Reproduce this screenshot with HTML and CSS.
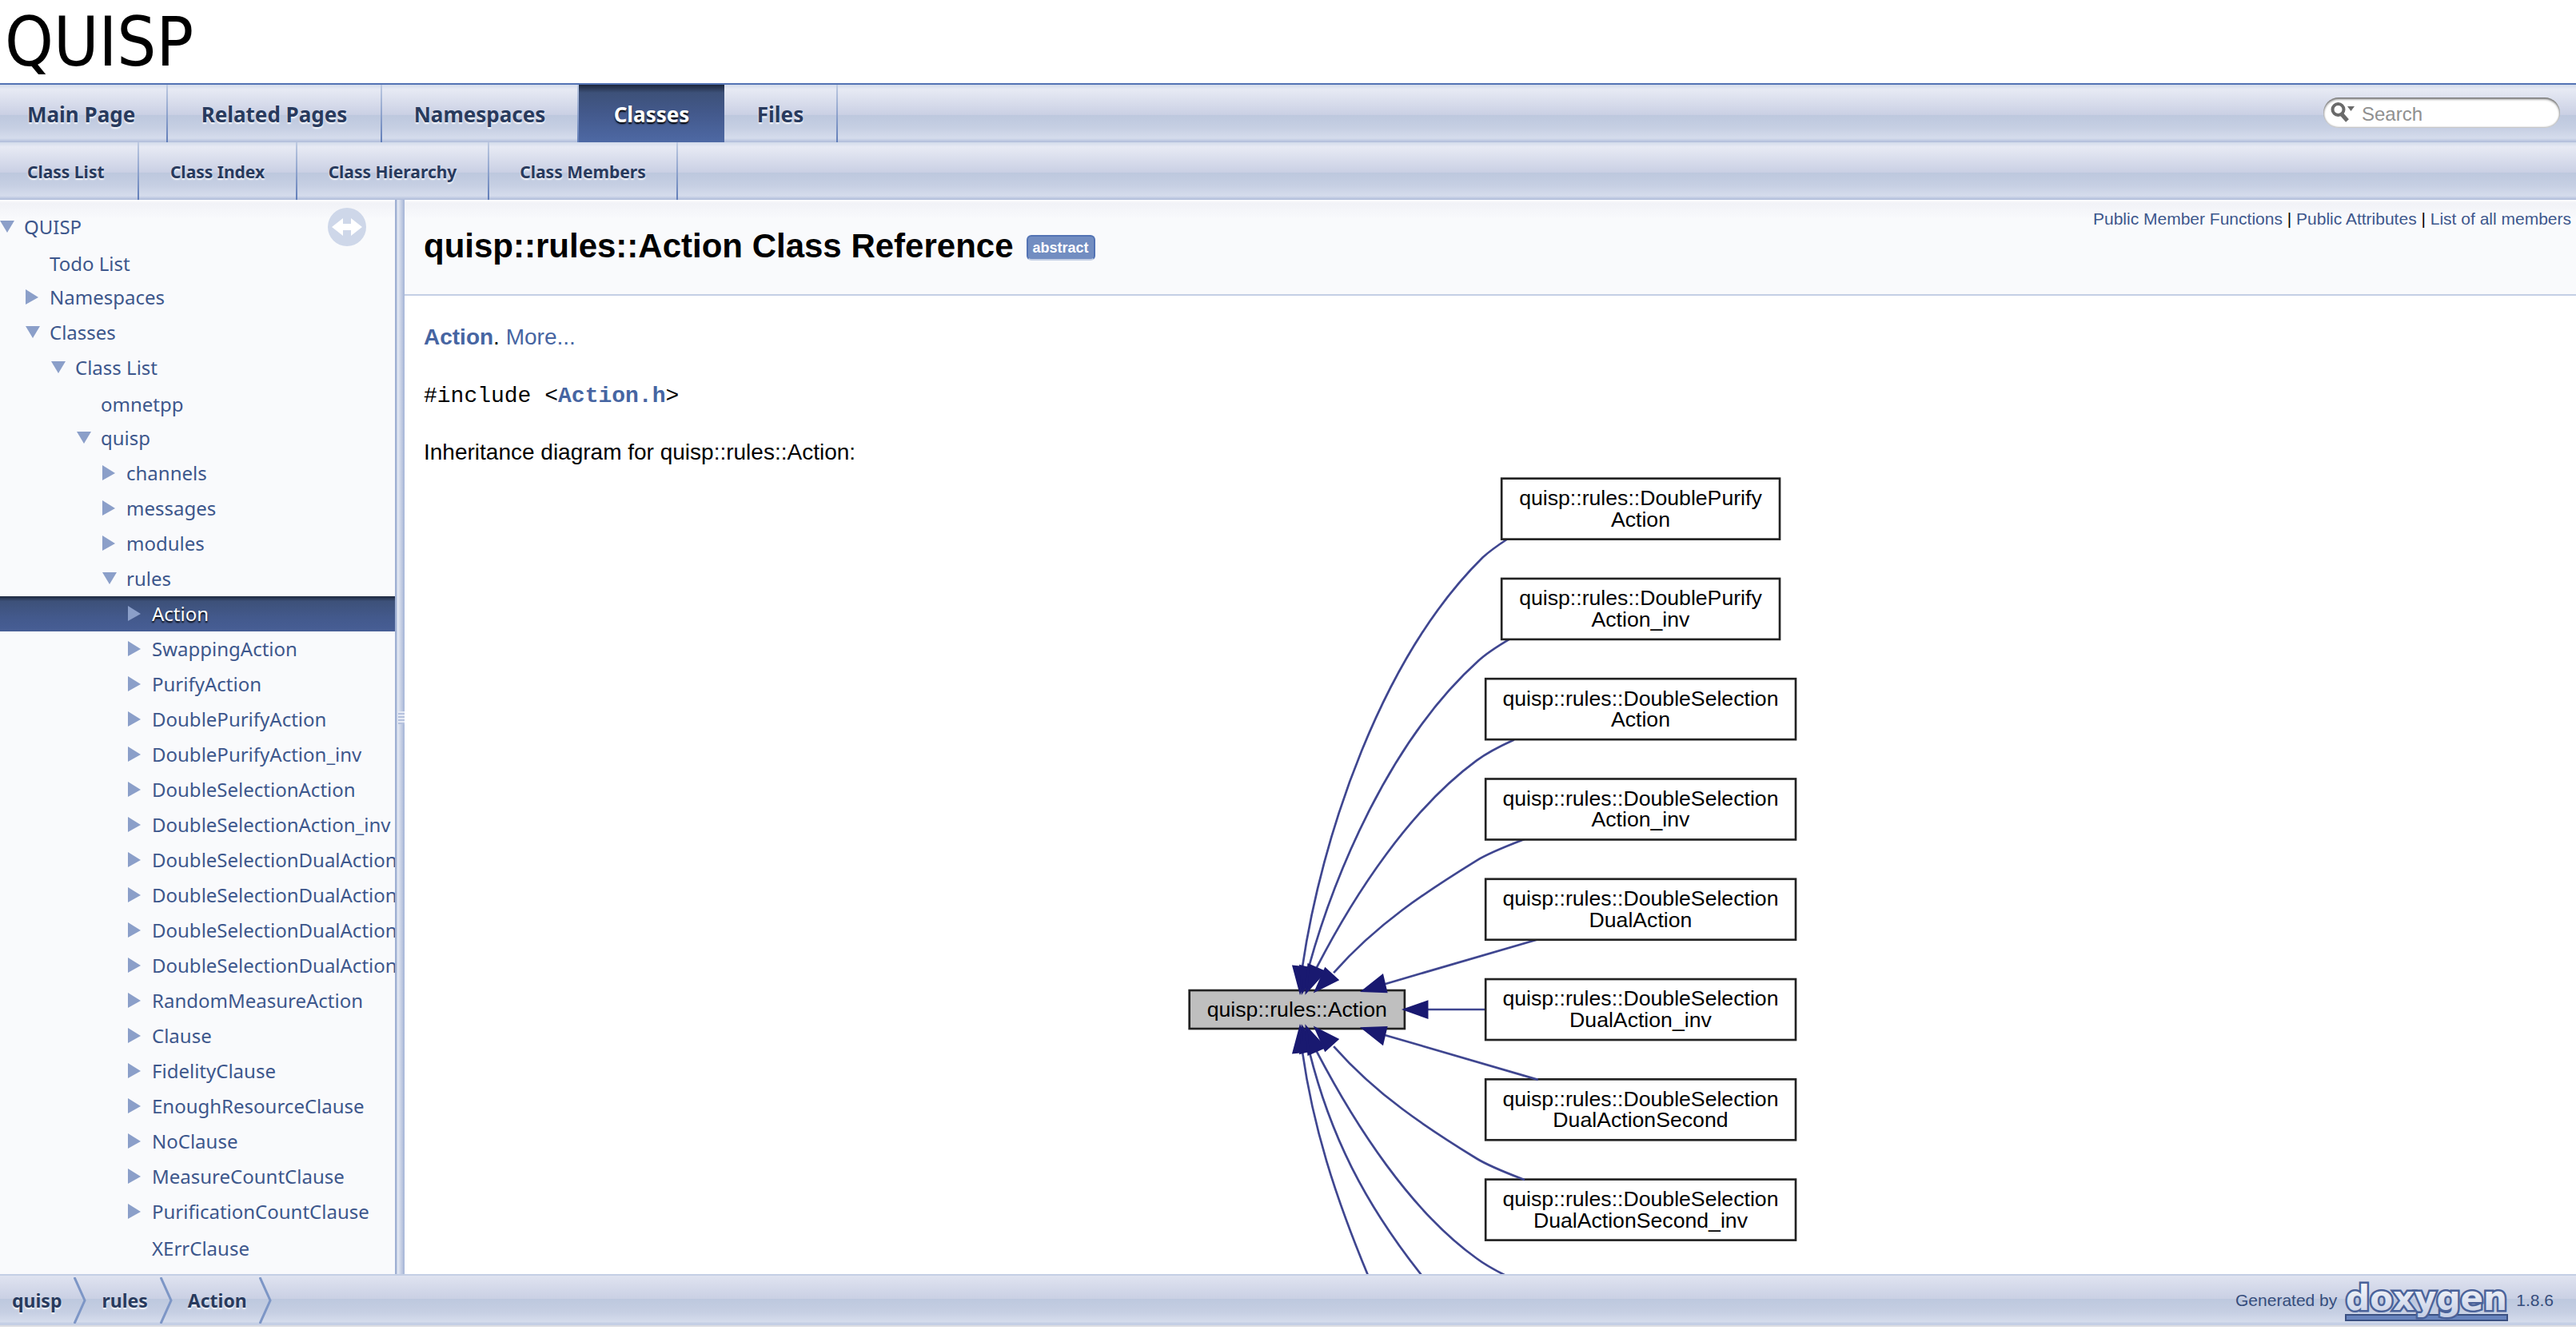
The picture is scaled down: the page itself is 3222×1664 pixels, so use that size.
FILE: index.html
```html
<!DOCTYPE html>
<html lang="en">
<head>
<meta charset="utf-8">
<title>QUISP: quisp::rules::Action Class Reference</title>
<link rel="stylesheet" href="styles.css">
</head>
<body>
<header class="top">
  <div class="project">QUISP</div>
  <nav class="tabs tabs-main" aria-label="Main">
    <a href="#">Main Page</a>
    <a href="#">Related Pages</a>
    <a href="#">Namespaces</a>
    <a href="#" class="current">Classes</a>
    <a href="#">Files</a>
    <form class="search">
      <svg class="search-icon" viewBox="0 0 30 30" aria-hidden="true"><circle cx="9.500" cy="11" r="7" fill="none" stroke="#6a6a6a" stroke-width="4"/><path d="M14 17L21 25" stroke="#6a6a6a" stroke-width="5"/><path d="M21 7h9l-4.500 6z" fill="#6a6a6a"/></svg>
      <input type="text" placeholder="Search" aria-label="Search">
    </form>
  </nav>
  <nav class="tabs tabs-sub" aria-label="Classes">
    <a href="#">Class List</a>
    <a href="#">Class Index</a>
    <a href="#">Class Hierarchy</a>
    <a href="#">Class Members</a>
  </nav>
</header>

<svg class="defs" aria-hidden="true">
  <symbol id="down" viewBox="0 0 18 16"><path d="M0 0H18L9 15Z" fill="#8b9fc9"/></symbol>
  <symbol id="right" viewBox="0 0 18 20"><path d="M0 0L16 10L0 19Z" fill="#8b9fc9"/></symbol>
  <symbol id="crumb" viewBox="0 0 16 58"><path d="M1 0L14 29L1 58" fill="none" stroke="#7d96c6" stroke-width="3"/></symbol>
</svg>

<div class="middle">
  <aside class="side">
    <button class="sync" type="button" aria-label="Synchronise"><svg viewBox="0 0 48 48"><circle cx="24" cy="24" r="24" fill="#ced7e9"/><path d="M5 24L19 13V20H29V13L43 24L29 35V28H19V35Z" fill="#fff"/></svg></button>
    <ul class="tree">
      <li class="l0"><svg class="arrow"><use href="#down"/></svg><a href="#">QUISP</a></li>
      <li class="l1 leaf"><a href="#">Todo List</a></li>
      <li class="l1"><svg class="arrow"><use href="#right"/></svg><a href="#">Namespaces</a></li>
      <li class="l1"><svg class="arrow"><use href="#down"/></svg><a href="#">Classes</a></li>
      <li class="l2"><svg class="arrow"><use href="#down"/></svg><a href="#">Class List</a></li>
      <li class="l3 leaf"><a href="#">omnetpp</a></li>
      <li class="l3"><svg class="arrow"><use href="#down"/></svg><a href="#">quisp</a></li>
      <li class="l4"><svg class="arrow"><use href="#right"/></svg><a href="#">channels</a></li>
      <li class="l4"><svg class="arrow"><use href="#right"/></svg><a href="#">messages</a></li>
      <li class="l4"><svg class="arrow"><use href="#right"/></svg><a href="#">modules</a></li>
      <li class="l4"><svg class="arrow"><use href="#down"/></svg><a href="#">rules</a></li>
      <li class="l5 selected"><svg class="arrow"><use href="#right"/></svg><a href="#">Action</a></li>
      <li class="l5"><svg class="arrow"><use href="#right"/></svg><a href="#">SwappingAction</a></li>
      <li class="l5"><svg class="arrow"><use href="#right"/></svg><a href="#">PurifyAction</a></li>
      <li class="l5"><svg class="arrow"><use href="#right"/></svg><a href="#">DoublePurifyAction</a></li>
      <li class="l5"><svg class="arrow"><use href="#right"/></svg><a href="#">DoublePurifyAction_inv</a></li>
      <li class="l5"><svg class="arrow"><use href="#right"/></svg><a href="#">DoubleSelectionAction</a></li>
      <li class="l5"><svg class="arrow"><use href="#right"/></svg><a href="#">DoubleSelectionAction_inv</a></li>
      <li class="l5"><svg class="arrow"><use href="#right"/></svg><a href="#">DoubleSelectionDualAction</a></li>
      <li class="l5"><svg class="arrow"><use href="#right"/></svg><a href="#">DoubleSelectionDualAction_inv</a></li>
      <li class="l5"><svg class="arrow"><use href="#right"/></svg><a href="#">DoubleSelectionDualActionSecond</a></li>
      <li class="l5"><svg class="arrow"><use href="#right"/></svg><a href="#">DoubleSelectionDualActionSecond_inv</a></li>
      <li class="l5"><svg class="arrow"><use href="#right"/></svg><a href="#">RandomMeasureAction</a></li>
      <li class="l5"><svg class="arrow"><use href="#right"/></svg><a href="#">Clause</a></li>
      <li class="l5"><svg class="arrow"><use href="#right"/></svg><a href="#">FidelityClause</a></li>
      <li class="l5"><svg class="arrow"><use href="#right"/></svg><a href="#">EnoughResourceClause</a></li>
      <li class="l5"><svg class="arrow"><use href="#right"/></svg><a href="#">NoClause</a></li>
      <li class="l5"><svg class="arrow"><use href="#right"/></svg><a href="#">MeasureCountClause</a></li>
      <li class="l5"><svg class="arrow"><use href="#right"/></svg><a href="#">PurificationCountClause</a></li>
      <li class="l5 leaf"><a href="#">XErrClause</a></li>
    </ul>
  </aside>
  <div class="splitter"><span class="grip"></span></div>
  <main class="doc">
    <div class="doc-head">
      <h1>quisp::rules::Action Class Reference <span class="label">abstract</span></h1>
      <div class="summary"><a href="#">Public Member Functions</a> | <a href="#">Public Attributes</a> | <a href="#">List of all members</a></div>
    </div>
    <div class="contents">
      <p><a href="#"><b>Action</b></a>. <a href="#">More...</a></p>
      <p><code>#include &lt;<a href="#"><b>Action.h</b></a>&gt;</code></p>
      <p>Inheritance diagram for quisp::rules::Action:</p>
      <svg class="graph" viewBox="0 0 293 506" role="img" aria-label="Inheritance diagram">
        <g id="near" class="edges">
          <path d="M161.300 173.300C153 176.500 145 179.500 138.800 183.300C115 198 92 213 71.700 236"/>
          <path d="M167.600 220.300L96 241.200"/>
        </g>
        <g class="edges">
          <path d="M153.400 32.300C149 35.200 145.500 37.500 141.700 41C94 88 66 172 57 233.400"/>
          <path d="M154.400 79.300C149 82.500 144 85.500 139.700 89.500C98 127 72 190 60 233.400"/>
          <path d="M156.400 126.600C150 129.500 144 132.500 138.700 136.400C108 159 82 198 63.600 233.800"/>
          <path d="M142.800 253.250H115"/>
          <path d="M57 273C62 308 72 340 87.800 378L98 400"/>
          <path d="M60.300 273C70 312 86 344 113 378L125 394"/>
          <path d="M156.400 380C150 377 144 374 138.700 370C108 348 82 308 63.600 272.700"/>
        </g>
        <g class="box">
          <rect class="self" x="4" y="244.250" width="101" height="18"/>
          <rect x="150.500" y="4" width="130.500" height="28.500"/>
          <rect x="150.500" y="51" width="130.500" height="28.500"/>
          <rect x="143" y="98" width="145.500" height="28.500"/>
          <rect x="143" y="145" width="145.500" height="28.500"/>
          <rect x="143" y="192" width="145.500" height="28.500"/>
          <rect x="143" y="239" width="145.500" height="28.500"/>
          <rect x="143" y="286" width="145.500" height="28.500"/>
          <rect x="143" y="333" width="145.500" height="28.500"/>
        </g>
        <g id="heads" class="heads">
          <path d="M56 245L61 233.800L52.800 233Z"/>
          <path d="M57 245L63.900 235L56.100 232.800Z"/>
          <path d="M58.900 245L67.500 235.500L59.900 232.200Z"/>
          <path d="M63.200 244.500L67.800 234.100L73.500 239.300Z"/>
          <path d="M85.400 244.500L94.600 237.200L96.400 244.900Z"/>
        </g>
        <use href="#near" transform="matrix(1 0 0 -1 0 506.500)"/>
        <use href="#heads" transform="matrix(1 0 0 -1 0 506.500)"/>
        <path class="heads" d="M105 253.250L115.600 249.500V257Z"/>
        <g class="names">
          <text x="54.500" y="256.500">quisp::rules::Action</text>
          <text x="215.700" y="16.500">quisp::rules::DoublePurify</text><text x="215.700" y="26.500">Action</text>
          <text x="215.700" y="63.500">quisp::rules::DoublePurify</text><text x="215.700" y="73.500">Action_inv</text>
          <text x="215.700" y="110.500">quisp::rules::DoubleSelection</text><text x="215.700" y="120.500">Action</text>
          <text x="215.700" y="157.500">quisp::rules::DoubleSelection</text><text x="215.700" y="167.500">Action_inv</text>
          <text x="215.700" y="204.500">quisp::rules::DoubleSelection</text><text x="215.700" y="214.500">DualAction</text>
          <text x="215.700" y="251.500">quisp::rules::DoubleSelection</text><text x="215.700" y="261.500">DualAction_inv</text>
          <text x="215.700" y="298.500">quisp::rules::DoubleSelection</text><text x="215.700" y="308.500">DualActionSecond</text>
          <text x="215.700" y="345.500">quisp::rules::DoubleSelection</text><text x="215.700" y="355.500">DualActionSecond_inv</text>
        </g>
      </svg>
    </div>
  </main>
</div>

<footer class="foot">
  <nav class="crumbs" aria-label="Breadcrumb">
    <a href="#">quisp</a><svg class="chev"><use href="#crumb"/></svg>
    <a href="#">rules</a><svg class="chev"><use href="#crumb"/></svg>
    <a href="#">Action</a><svg class="chev"><use href="#crumb"/></svg>
  </nav>
  <div class="credit">
    <span>Generated by</span>
    <a href="#" aria-label="doxygen"><svg class="logo" viewBox="0 0 208 56">
      <defs><linearGradient id="lg" x1="0" y1="0" x2="0" y2="1"><stop offset="0" stop-color="#fff"/><stop offset="1" stop-color="#c3cde4"/></linearGradient></defs>
      <rect x="3" y="46" width="202" height="7" fill="#6884bd" stroke="#3b5182" stroke-width="2"/>
      <text x="104" y="40" text-anchor="middle" class="logo-text">doxygen</text>
    </svg></a>
    <span>1.8.6</span>
  </div>
</footer>
</body>
</html>
```
FILE: styles.css
```css
* { box-sizing: border-box; }

body {
  margin: 0;
  height: 100vh;
  display: flex;
  flex-direction: column;
  overflow: hidden;
  padding-bottom: 4px;
  background: #fff;
  color: #000;
  font: 28px/32px "Liberation Sans", Arial, sans-serif;
}

a { color: #3d578c; text-decoration: none; }

.defs { display: none; }

.top { flex: none; }

.project {
  height: 106px;
  padding-left: 6px;
  border-bottom: 2px solid #5373b4;
  font: 86px/104px "DejaVu Sans Condensed", "DejaVu Sans", sans-serif;
}

.tabs {
  display: grid;
  height: 72px;
  background: linear-gradient(#d3dbeb, #e7eaf4 8%, #cad0e4 52%, #bdc8de 53%, #c6cfe3 75%, #d5dcec 93%, #aebbd9);
  font-family: "Noto Sans", sans-serif;
  font-weight: bold;
  text-shadow: 0 2px 2px rgba(255, 255, 255, .9);
}

.tabs-main { grid-template-columns: 210px 268px 246px 182px 142px 1fr; font-size: 26px; }
.tabs-sub { grid-template-columns: 174px 198px 240px 236px; font-size: 21px; }

.tabs a {
  display: flex;
  align-items: center;
  justify-content: center;
  padding-top: 2px;
  color: #283a5d;
  border-right: 2px solid;
  border-image: linear-gradient(#bfcbe2, #5f7cb8) 1;
}

.tabs a:first-child { justify-content: flex-start; padding-left: 34px; }

.tabs a.current {
  color: #fff;
  border: 0;
  background: linear-gradient(#1c273d, #3d5179 14%, #43598c 50%, #4e69a4);
  text-shadow: 0 2px 2px #000;
}

.search {
  justify-self: end;
  align-self: center;
  display: flex;
  align-items: center;
  width: 296px;
  height: 38px;
  margin: 0 20px 2px 0;
  padding-left: 9px;
  border-radius: 19px;
  background: #fff;
  box-shadow: inset 0 2px 3px #666, inset 0 -1px 2px #bbb;
}

.search-icon { width: 30px; height: 30px; flex: none; }

.search input {
  width: 200px;
  margin: 4px 0 0 9px;
  padding: 0;
  border: 0;
  background: none;
  font: 24px/28px "Liberation Sans", Arial, sans-serif;
}

.search input::placeholder { color: #909090; opacity: 1; }

.middle { flex: 1; min-height: 0; display: flex; }

.side {
  position: relative;
  flex: none;
  width: 494px;
  overflow: hidden;
  background: linear-gradient(#fff, #f1f2f7 4px, #f9fafc 24px);
}

.sync {
  position: absolute;
  top: 10px;
  right: 36px;
  width: 48px;
  height: 48px;
  padding: 0;
  border: 0;
  background: none;
}

.sync svg { display: block; }

.tree {
  margin: 0;
  padding: 12px 0 0;
  list-style: none;
  font: 24px/44px "Noto Sans", sans-serif;
  white-space: nowrap;
}

.tree li { display: flex; align-items: center; height: 44px; }
.tree .leaf { padding-top: 4px; }
.tree .leaf::before { content: ""; width: 30px; flex: none; }
.tree .arrow { width: 18px; height: 20px; margin-right: 12px; flex: none; }
.l1 { padding-left: 32px; }
.l2 { padding-left: 64px; }
.l3 { padding-left: 96px; }
.l4 { padding-left: 128px; }
.l5 { padding-left: 160px; }

.tree .selected { background: linear-gradient(#1c273d, #3d5179 14%, #43598c 60%, #475e95); }
.tree .selected a { color: #fff; text-shadow: 0 2px 2px #000; }

.splitter {
  flex: none;
  width: 12px;
  display: flex;
  align-items: center;
  justify-content: flex-end;
  background: linear-gradient(90deg, #9fb0d3 2px, #e6eaf4 3px, #dbe1ee 5px, #a3b3d6);
}

.grip { width: 8px; height: 16px; margin-bottom: 48px; background: repeating-linear-gradient(#e6eaf4 0 2px, #b5c1dd 2px 4px); }

.doc { flex: 1; min-width: 0; overflow: hidden; }

.doc-head {
  display: flex;
  justify-content: space-between;
  align-items: flex-start;
  height: 120px;
  padding: 0 6px 0 24px;
  border-bottom: 2px solid #c4cfe5;
  background: linear-gradient(#fff, #f1f2f7 4px, #f9fafc 24px);
}

.doc-head h1 {
  display: flex;
  align-items: center;
  gap: 16px;
  margin: 34px 0 0;
  font-size: 42px;
  line-height: 48px;
}

.label {
  margin-top: 4px;
  padding: 0 6px;
  border: 2px solid #5373b4;
  border-bottom-color: #c4cfe5;
  border-radius: 6px;
  background: #728dc1;
  color: #fff;
  font-size: 18px;
  line-height: 28px;
}

.summary { padding-top: 12px; font-size: 21px; line-height: 24px; }

.contents { padding: 36px 18px 0 24px; }
.contents p { margin: 0 0 40px; }
.contents a { color: #4665a2; }
.contents code { font: 28px/24px "Liberation Mono", "Courier New", monospace; }
.contents p:nth-of-type(3) { margin-bottom: 6px; }

.graph { display: block; width: 781px; margin: 0 auto; }
.edges { fill: none; stroke: #3f4690; stroke-width: 1; }
.heads { fill: #191970; stroke: #191970; stroke-width: 1; }
.box { fill: #fff; stroke: #222; stroke-width: 1; }
.box .self { fill: #bfbfbf; }
.names { font: 10px "Liberation Sans", Arial, sans-serif; text-anchor: middle; }

.foot {
  flex: none;
  display: flex;
  justify-content: space-between;
  height: 66px;
  border-top: 2px solid #c4cfe5;
  border-bottom: 2px solid #dcdde2;
  background: linear-gradient(#dfe3f0, #cad0e4 46%, #bdc8de 47%, #c6cfe3 74%, #d5dcec 93%, #c4cfe5 96%);
}

.crumbs, .credit { display: flex; align-items: center; }
.crumbs { font: bold 23px/32px "Noto Sans", sans-serif; text-shadow: 0 2px 2px rgba(255, 255, 255, .9); }
.crumbs a { padding: 0 15px; color: #283a5d; }
.crumbs a + .chev { margin-right: 4px; }
.chev { width: 16px; height: 58px; }
.credit { gap: 8px; padding-right: 28px; font-size: 21px; color: #364d7c; }
.logo { display: block; width: 208px; height: 56px; }
.logo-text { font: bold 42px "DejaVu Sans", sans-serif; fill: url(#lg); stroke: #4a6299; stroke-width: 5px; paint-order: stroke; }
```
